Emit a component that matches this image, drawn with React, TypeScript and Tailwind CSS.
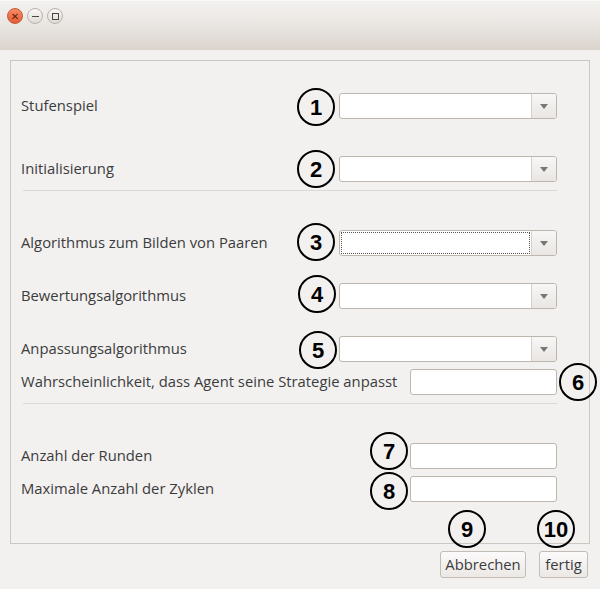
import React from "react";

const font = { fontFamily: '"Open Sans", "DejaVu Sans", sans-serif' };

function Combo({ focused = false }: { focused?: boolean }) {
  return (
    <div className="flex h-[26px] w-[218px] rounded-[3px] border border-[#bdb6af] bg-white overflow-hidden">
      <div className="flex-1 p-[1px]">
        <div className={focused ? "h-full w-full border border-dotted border-[#555]" : "h-full w-full"} />
      </div>
      <div className="flex w-[25px] items-center justify-center border-l border-[#d6d1cc] bg-gradient-to-b from-[#f8f7f6] to-[#e9e6e3]">
        <div className="h-0 w-0 border-x-[4px] border-t-[5px] border-x-transparent border-t-[#7a7672]" />
      </div>
    </div>
  );
}

function Entry() {
  return <div className="h-[26px] w-[147px] rounded-[3px] border border-[#bdb6af] bg-white" />;
}

function Badge({ n, x, y }: { n: string; x: number; y: number }) {
  return (
    <div
      className="absolute flex h-[38px] w-[38px] items-center justify-center rounded-full border-2 border-black text-[22px] font-bold text-black"
      style={{ left: x - 19, top: y - 19, fontFamily: '"Liberation Sans", Arial, sans-serif' }}
    >
      {n}
    </div>
  );
}

function Row({ label, children, className = "" }: { label: string; children: React.ReactNode; className?: string }) {
  return (
    <div className={`flex h-[26px] items-center justify-between ${className}`}>
      <span className="-mt-[2px] text-[14.8px] text-[#3c3c3c]">{label}</span>
      {children}
    </div>
  );
}

export default function App() {
  return (
    <div className="relative h-[589px] w-[600px] overflow-hidden bg-[#f2f1f0]" style={font}>
      {/* title bar */}
      <div className="flex h-[50px] items-start gap-[4px] border-t border-[#fafaf9] bg-gradient-to-b from-[#f3f2f0] via-[#e9e5e1] to-[#dbd4cd] pl-[7px] pt-[7px]">
        <div className="flex h-[16px] w-[16px] items-center justify-center rounded-full border border-[#c65a38] bg-gradient-to-b from-[#f88a63] to-[#e35d33] text-[10px] leading-none text-[#5a2010]">
          ✕
        </div>
        <div className="flex h-[16px] w-[16px] items-center justify-center rounded-full border border-[#b8b2ac] bg-gradient-to-b from-[#faf9f8] to-[#dedad6]">
          <div className="h-[1px] w-[7px] bg-[#4a4744]" />
        </div>
        <div className="flex h-[16px] w-[16px] items-center justify-center rounded-full border border-[#b8b2ac] bg-gradient-to-b from-[#faf9f8] to-[#dedad6]">
          <div className="h-[7px] w-[7px] border border-[#4a4744]" />
        </div>
      </div>

      {/* main frame */}
      <div className="mx-[10px] mt-[10px] flex h-[484px] w-[580px] flex-col border border-[#cdc7c1] pl-[10px] pr-[32px]">
        <Row label="Stufenspiel" className="mt-[32px]">
          <Combo />
        </Row>
        <Row label="Initialisierung" className="mt-[37px]">
          <Combo />
        </Row>
        <div className="ml-[2px] mt-[8px] h-[1px] bg-[#dcd8d4]" />
        <Row label="Algorithmus zum Bilden von Paaren" className="mt-[39px]">
          <Combo focused />
        </Row>
        <Row label="Bewertungsalgorithmus" className="mt-[27px]">
          <Combo />
        </Row>
        <Row label="Anpassungsalgorithmus" className="mt-[27px]">
          <Combo />
        </Row>
        <Row label="Wahrscheinlichkeit, dass Agent seine Strategie anpasst" className="mt-[7px]">
          <Entry />
        </Row>
        <div className="ml-[2px] mt-[8px] h-[1px] bg-[#dcd8d4]" />
        <Row label="Anzahl der Runden" className="mt-[39px]">
          <Entry />
        </Row>
        <Row label="Maximale Anzahl der Zyklen" className="mt-[7px]">
          <Entry />
        </Row>
      </div>

      {/* buttons */}
      <div className="mt-[7px] flex justify-end gap-[13px] pr-[12px]">
        <button className="h-[27px] w-[86px] rounded-[3px] border border-[#c4bdb6] bg-gradient-to-b from-[#fcfbfb] to-[#ebe8e5] text-[14.8px] text-[#3c3c3c]">
          Abbrechen
        </button>
        <button className="h-[27px] w-[49px] rounded-[3px] border border-[#c4bdb6] bg-gradient-to-b from-[#fcfbfb] to-[#ebe8e5] text-[14.8px] text-[#3c3c3c]">
          fertig
        </button>
      </div>

      {/* annotation badges */}
      <Badge n="1" x={316} y={107} />
      <Badge n="2" x={316} y={169} />
      <Badge n="3" x={316} y={242} />
      <Badge n="4" x={317} y={294} />
      <Badge n="5" x={318} y={350} />
      <Badge n="6" x={578} y={382} />
      <Badge n="7" x={389} y={451} />
      <Badge n="8" x={389} y={491} />
      <Badge n="9" x={467} y={529} />
      <Badge n="10" x={556} y={529} />
    </div>
  );
}
